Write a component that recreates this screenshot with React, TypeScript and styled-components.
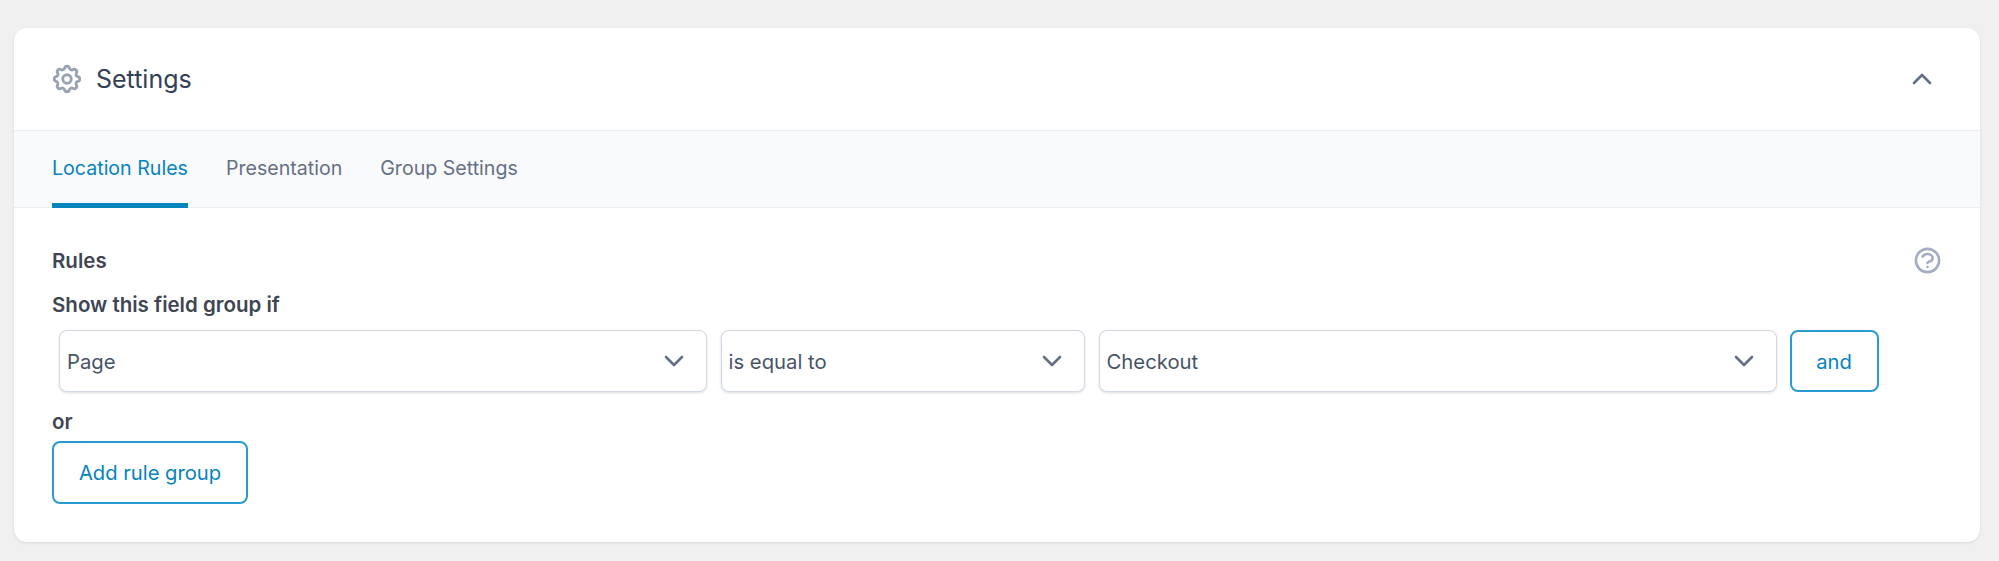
import React from "react";
import styled, { createGlobalStyle } from "styled-components";
import { HiOutlineCog, HiOutlineQuestionMarkCircle } from "react-icons/hi";

const GlobalStyle = createGlobalStyle`
    html, body {
        margin: 0;
        padding: 0;
        background: #f0f0f0;
        font-family: Inter, "Liberation Sans", sans-serif;
        -webkit-font-smoothing: antialiased;
    }
`;

const Page = styled.div`
    box-sizing: border-box;
    height: 561px;
    padding: 28px 19px 19px 14px;
    overflow: hidden;
`;

const Card = styled.section`
    height: 514px;
    background: #fff;
    border-radius: 13px;
    box-shadow: 0 1px 3px rgba(16, 24, 40, 0.1);
    overflow: hidden;
`;

const Header = styled.header`
    box-sizing: border-box;
    height: 102px;
    display: flex;
    align-items: center;
    padding: 0 48px 0 38px;
`;

const Title = styled.h2`
    flex: 1;
    margin: 0 0 0 14px;
    font-size: 25px;
    font-weight: 400;
    color: #344054;
`;

const GearIcon = styled(HiOutlineCog)`
    width: 34px;
    height: 34px;
    margin-left: -2px;
    margin-right: -2px;
    color: #98a2b3;
`;

const Chevron = styled.svg`
    display: block;
    flex: none;
    width: 20px;
    height: 12px;
    fill: none;
    stroke: #667085;
    stroke-width: 2.6;
    stroke-linecap: round;
    stroke-linejoin: round;
`;

const Tabs = styled.nav`
    box-sizing: border-box;
    height: 78px;
    display: flex;
    gap: 38px;
    padding: 0 38px;
    background: #f9fafb;
    border-top: 1px solid #eaecf0;
    border-bottom: 1px solid #eaecf0;
`;

const Tab = styled.a<{ $active?: boolean }>`
    box-sizing: border-box;
    display: flex;
    align-items: center;
    height: 77px;
    margin-bottom: -1px;
    padding-top: 2px;
    font-size: 19.6px;
    font-weight: 400;
    color: ${(p) => (p.$active ? "#0783be" : "#667085")};
    border-bottom: 5px solid ${(p) => (p.$active ? "#0783be" : "transparent")};
`;

const Body = styled.div`
    padding: 40px 38px 0;
`;

const RulesHead = styled.div`
    display: flex;
    justify-content: space-between;
    align-items: center;
    height: 26px;
    padding-right: 1px;
`;

const Label = styled.div`
    font-size: 20.5px;
    font-weight: 600;
    line-height: 26px;
    color: #3f4652;
`;

const HelpIcon = styled(HiOutlineQuestionMarkCircle)`
    width: 31px;
    height: 31px;
    margin-right: -2px;
    margin-top: -2px;
    color: #a5aec0;
`;

const ConditionLabel = styled(Label)`
    margin-top: 18px;
`;

const RuleRow = styled.div`
    display: flex;
    align-items: stretch;
    height: 62px;
    margin-top: 12px;
    padding-left: 7px;
`;

const Select = styled.div<{ $width: number }>`
    box-sizing: border-box;
    width: ${(p) => p.$width}px;
    margin-right: 13.5px;
    display: flex;
    align-items: center;
    justify-content: space-between;
    padding: 0 22px 0 7px;
    background: #fff;
    border: 1.5px solid #d3d9e4;
    border-radius: 8px;
    box-shadow: 0 1px 3px rgba(16, 24, 40, 0.14);
    font-size: 20.3px;
    color: #475467;
`;

const OutlineButton = styled.button`
    box-sizing: border-box;
    display: block;
    background: #fff;
    border: 2px solid #2a9bd0;
    border-radius: 8px;
    font-family: inherit;
    font-size: 20.2px;
    font-weight: 400;
    color: #0783be;
    padding: 0;
`;

const AndButton = styled(OutlineButton)`
    width: 89px;
    margin-left: -1px;
`;

const OrLabel = styled(Label)`
    margin-top: 17px;
`;

const AddGroupButton = styled(OutlineButton)`
    width: 196px;
    height: 63px;
    margin-top: 6px;
`;

const ChevronDown = () => (
    <Chevron viewBox="0 0 20 12">
        <path d="M2 2l8 8 8-8" />
    </Chevron>
);

const rules = [
    { label: "Page", width: 648 },
    { label: "is equal to", width: 364.5 },
    { label: "Checkout", width: 678.5 },
];

const App: React.FC = () => {
    return (
        <Page>
            <GlobalStyle />
            <Card>
                <Header>
                    <GearIcon />
                    <Title>Settings</Title>
                    <Chevron viewBox="0 0 20 12">
                        <path d="M2 10l8-8 8 8" />
                    </Chevron>
                </Header>
                <Tabs>
                    <Tab $active>Location Rules</Tab>
                    <Tab>Presentation</Tab>
                    <Tab>Group Settings</Tab>
                </Tabs>
                <Body>
                    <RulesHead>
                        <Label>Rules</Label>
                        <HelpIcon />
                    </RulesHead>
                    <ConditionLabel>Show this field group if</ConditionLabel>
                    <RuleRow>
                        {rules.map((rule) => (
                            <Select key={rule.label} $width={rule.width}>
                                {rule.label}
                                <ChevronDown />
                            </Select>
                        ))}
                        <AndButton>and</AndButton>
                    </RuleRow>
                    <OrLabel>or</OrLabel>
                    <AddGroupButton>Add rule group</AddGroupButton>
                </Body>
            </Card>
        </Page>
    );
};

export default App;
